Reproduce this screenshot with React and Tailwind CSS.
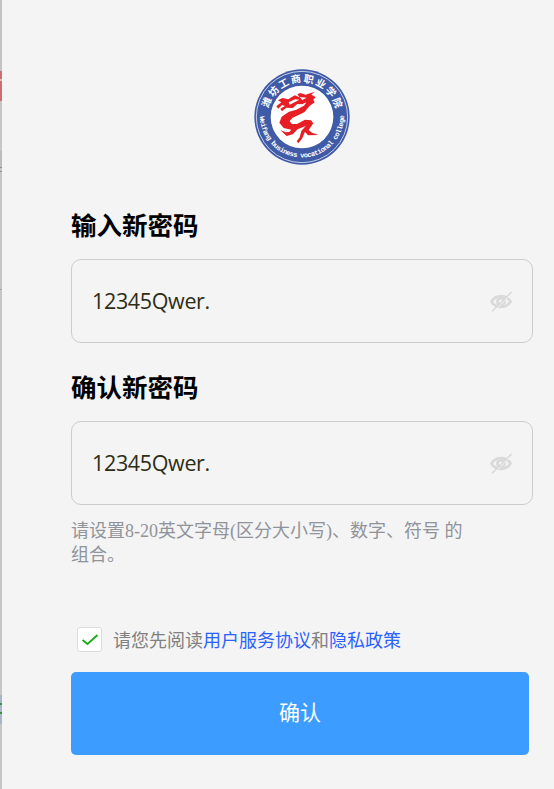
import React from "react";

const SANS = "font-['Open_Sans','Noto_Sans_CJK_SC',sans-serif]";
const SERIF = "font-['Liberation_Serif','Noto_Sans_CJK_SC',sans-serif]";

function CollegeSeal() {
  return (
    <svg viewBox="21 21 288 288" className="h-24 w-24" role="img">
      <defs>
        <path id="seal-top" d="M61 165 A104 104 0 0 1 269 165" />
        <path id="seal-bottom" d="M38.500 160 A126.500 126.500 0 1 0 291.500 160" />
      </defs>
      <circle cx="165" cy="165" r="143" fill="#3f5aa6" />
      <circle cx="165" cy="165" r="137" fill="none" stroke="#dfe4f1" strokeWidth="2.500" />
      <circle cx="165" cy="165" r="94" fill="#fff" />
      <text fill="#fff" fontSize="30" fontWeight="700" fontFamily="'Noto Sans CJK SC', sans-serif">
        <textPath href="#seal-top" startOffset="26" textLength="276">潍坊工商职业学院</textPath>
      </text>
      <text fill="#fff" fontSize="21" fontWeight="700" fontFamily="'Liberation Mono', monospace">
        <textPath href="#seal-bottom" startOffset="3" textLength="394" lengthAdjust="spacing">Weifang business vocational college</textPath>
      </text>
      <g fill="#e71f25">
        <path d="M88 133 L103 121 L93 115 L106 108 L124 112 L143 100 L158 106 L151 97 L160 93 L176 98 L203 89 L193 98 L206 105 L199 113 L203 121 L187 133 L172 151 L153 160 L137 167 L128 177 L134 186 L150 186 L174 173 L192 175 L199 184 L185 204 L195 212 L215 219 L183 220 L174 209 L165 230 L154 244 L149 238 L158 226 L163 207 L176 192 L152 202 L137 217 L116 223 L133 203 L110 198 L97 182 L104 164 L126 149 L148 143 L171 131 L178 121 L165 127 L151 126 L137 138 L118 137 L105 148 L100 140 L114 132 L105 129 L94 140 Z" />
        <path d="M100 204 L116 211 L137 209 L118 221 Z" />
      </g>
      <path d="M125 121 L144 112 L157 113 L143 121 L128 128 Z" fill="#fff" />
      <path d="M158 105 L179 107 L166 114 Z" fill="#fff" />
    </svg>
  );
}

function HiddenEye() {
  return (
    <svg viewBox="0 0 24 24" className="h-[23px] w-[23px] shrink-0" fill="none">
      <path d="M1.500 12 C6 4.500 17 4.500 21.500 12 C17 19.500 6 19.500 1.500 12 Z" stroke="#dadada" strokeWidth="2.800" />
      <circle cx="11.500" cy="12" r="3.700" stroke="#dadada" strokeWidth="3" />
      <path d="M3.500 23 L23.500 3" stroke="#f4f4f4" strokeWidth="1" />
      <path d="M2 22.500 L22.500 2" stroke="#d9d9d9" strokeWidth="1.600" />
    </svg>
  );
}

function PasswordField({ label }) {
  return (
    <div>
      <h2 className={`${SANS} h-[38px] text-[25.5px] leading-[38px] font-bold text-black`}>{label}</h2>
      <div className="mt-[15px] flex h-[84px] w-[462px] items-center justify-between rounded-[10px] border border-[#ccc] pr-[19px] pl-5">
        <span className={`${SANS} text-[21.5px] leading-8 tracking-[-0.35px] text-[#2d2d16]`}>12345Qwer.</span>
        <HiddenEye />
      </div>
    </div>
  );
}

function PageEdge() {
  return (
    <div className="flex h-full w-[2px] shrink-0 flex-col bg-[#c6c6c6]">
      <div className="h-[71px] bg-[#c3c3c3]" />
      <div className="h-[8px] bg-[#cb6e70]" />
      <div className="h-[2px]" />
      <div className="h-[20px] bg-[#cb6e70]" />
      <div className="h-[50px]" />
      <div className="h-[16px] bg-[#bcbcbc]" />
      <div className="h-px bg-[#929292]" />
      <div className="h-[3px]" />
      <div className="h-px bg-[#929292]" />
      <div className="h-[117px]" />
      <div className="h-px bg-[#a5a5a5]" />
      <div className="h-[405px]" />
      <div className="h-[8px] bg-[#a9b5c7]" />
      <div className="h-[2px] bg-[#369044]" />
      <div className="h-[7px] bg-[#a9b5c7]" />
      <div className="h-[2px] bg-[#369044]" />
      <div className="h-[10px] bg-[#a9b5c7]" />
    </div>
  );
}

export default function App() {
  return (
    <div className="flex h-[789px] w-[554px] overflow-hidden bg-[#f4f4f4]">
      <PageEdge />
      <main className="flex w-[531px] flex-col pl-[69px]">
        <div className="mt-[69px] flex w-[462px] justify-center">
          <CollegeSeal />
        </div>
        <div className="mt-[41px] flex flex-col gap-[25px]">
          <PasswordField label="输入新密码" />
          <PasswordField label="确认新密码" />
        </div>
        <p className={`${SERIF} mt-[14px] w-[410px] text-[18px] leading-6 text-[#909399]`}>
          请设置8-20英文字母(区分大小写)、数字、符号 的<br />组合。
        </p>
        <div className="mt-[60px] ml-[6px] flex h-[25px] items-center">
          <div className="flex h-[25px] w-[25px] items-center justify-center rounded-[3px] border border-[#dcdcdc] bg-white">
            <svg viewBox="0 0 18 14" className="h-[14px] w-[18px]" fill="none">
              <path d="M1.500 7 L6.500 11 L16.500 2" stroke="#1aad19" strokeWidth="1.900" />
            </svg>
          </div>
          <p className={`${SERIF} ml-[11px] pt-[2px] text-[18px] leading-6 text-[#808080]`}>
            请您先阅读<a className="text-[#2b62ff]">用户服务协议</a>和<a className="text-[#2b62ff]">隐私政策</a>
          </p>
        </div>
        <button className={`${SANS} mt-5 h-[83px] w-[458px] rounded-[5px] bg-[#3d9cff] pb-[2px] text-[21px] text-white`}>确认</button>
      </main>
    </div>
  );
}
